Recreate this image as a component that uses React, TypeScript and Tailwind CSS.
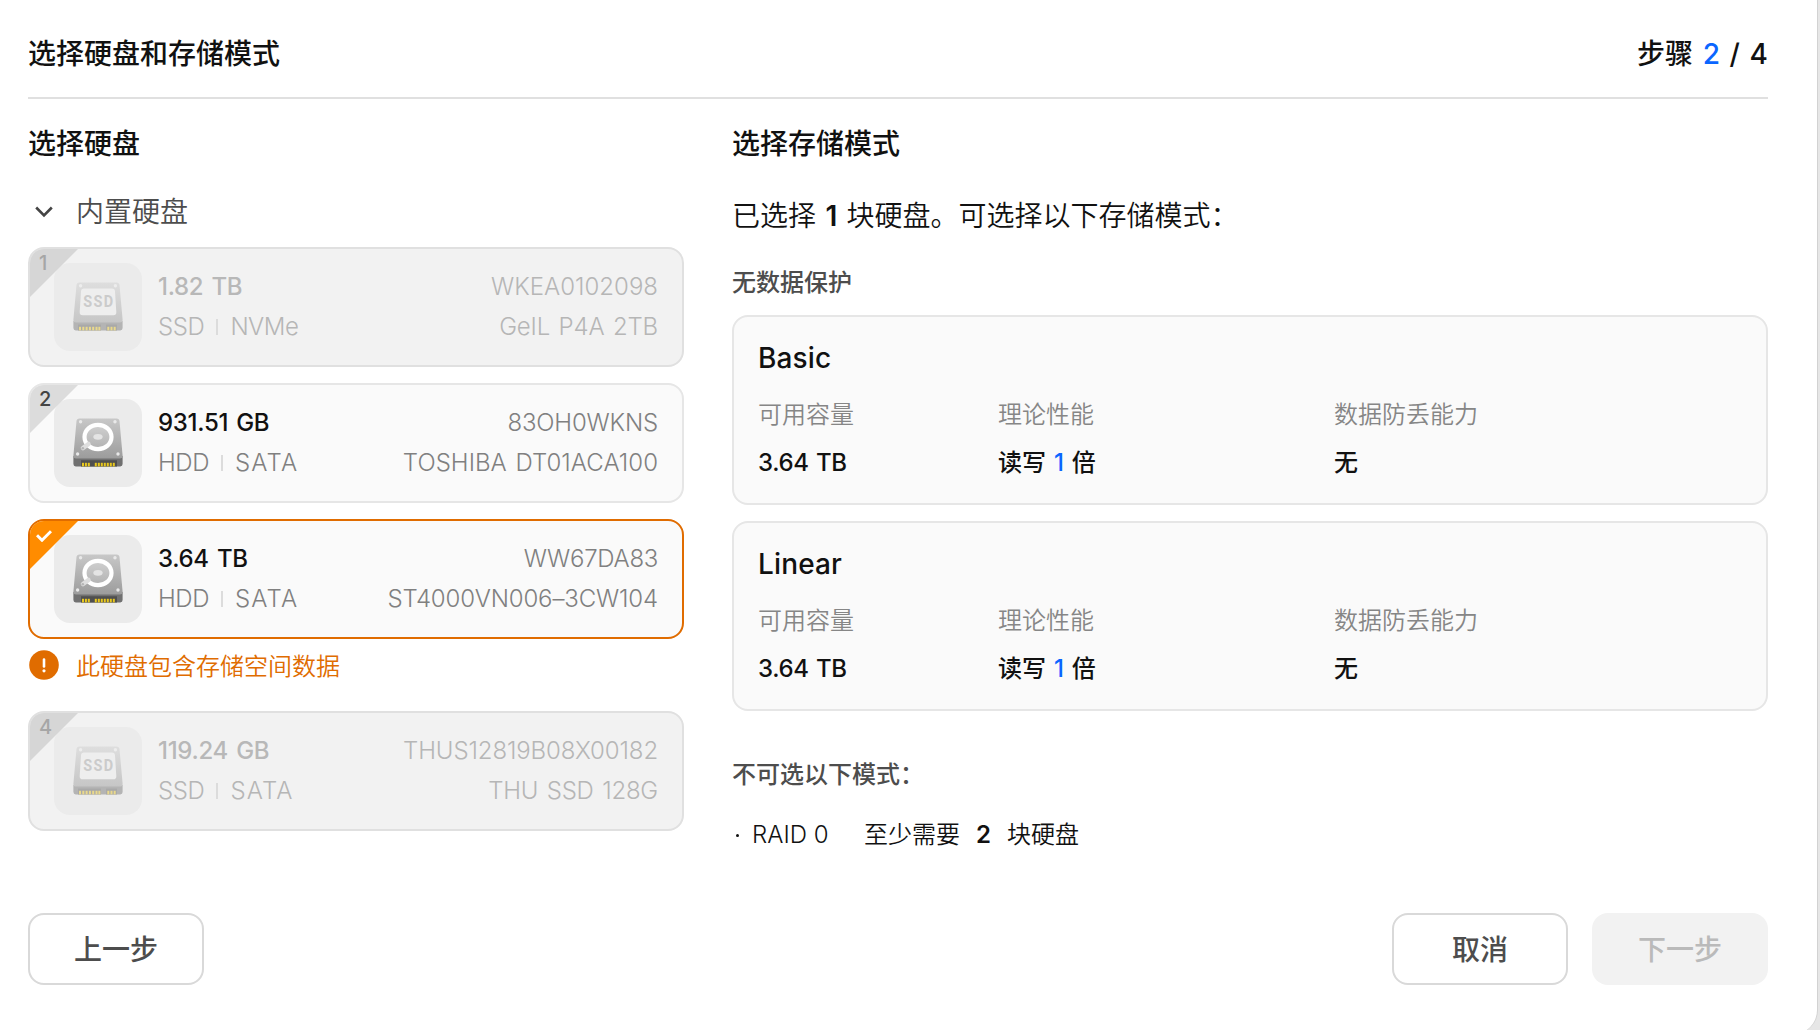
import React, { useId } from "react";

type Disk = {
  slot: number;
  kind: "SSD" | "HDD";
  size: string;
  bus: string;
  serial: string;
  serialTracking: string;
  model: string;
  modelTracking: string;
  state: "disabled" | "normal" | "selected";
};

const disks: Disk[] = [
  { slot: 1, kind: "SSD", size: "1.82 TB", bus: "NVMe", serial: "WKEA0102098", serialTracking: "tracking-[0px]", model: "GeIL P4A 2TB", modelTracking: "tracking-[-0.18px]", state: "disabled" },
  { slot: 2, kind: "HDD", size: "931.51 GB", bus: "SATA", serial: "83OH0WKNS", serialTracking: "tracking-[-0.18px]", model: "TOSHIBA DT01ACA100", modelTracking: "tracking-[0.03px]", state: "normal" },
  { slot: 3, kind: "HDD", size: "3.64 TB", bus: "SATA", serial: "WW67DA83", serialTracking: "tracking-[-0.3px]", model: "ST4000VN006–3CW104", modelTracking: "tracking-[-0.14px]", state: "selected" },
  { slot: 4, kind: "SSD", size: "119.24 GB", bus: "SATA", serial: "THUS12819B08X00182", serialTracking: "tracking-[-0.11px]", model: "THU SSD 128G", modelTracking: "tracking-[-0.22px]", state: "disabled" },
];

function Pins({ xs, fill }: { xs: number[]; fill: string }) {
  return (
    <>
      {xs.map((x) => (
        <rect key={x} x={x} y="44.8" width="2" height="3.6" fill={fill} />
      ))}
    </>
  );
}

function SsdIcon() {
  const id = useId();
  return (
    <svg viewBox="0 0 50 49" className="h-[49px] w-[50px]">
      <defs>
        <linearGradient id={id} x1="0" y1="0" x2="0" y2="1">
          <stop offset="0" stopColor="#dedede" />
          <stop offset="1" stopColor="#c6c6c6" />
        </linearGradient>
      </defs>
      <path d="M.4 39h49.2v7a2.4 2.4 0 0 1-2.400 2.400H2.800A2.400 2.400 0 0 1 .4 46Z" fill="#b4b4b4" />
      <path d="M6.500.4h37a3 3 0 0 1 3 2.700L49.600 37.500a2.800 2.800 0 0 1-2.800 3H3.200a2.800 2.800 0 0 1-2.800-3L3.500 3.100a3 3 0 0 1 3-2.700Z" fill={`url(#${id})`} />
      <path d="M5 42.500h23v6H5zM33 42.500h11v6H33z" fill="#a9a9a9" />
      <Pins xs={[6, 9.3, 12.600, 15.900, 19.200, 22.500, 25.400]} fill="#ead98c" />
      <Pins xs={[34.300, 37.500, 40.700]} fill="#ead98c" />
      <path d="M11 6.400h28a3 3 0 0 1 3 2.800L43.300 30a3 3 0 0 1-3 3.200H9.700a3 3 0 0 1-3-3.200L8 9.200a3 3 0 0 1 3-2.800Z" fill="#eeeeee" />
      <circle cx="7.600" cy="3.700" r="1.700" fill="#ededed" />
      <circle cx="42.400" cy="3.700" r="1.700" fill="#ededed" />
      <text x="10.300" y="25.400" textLength="31" lengthAdjust="spacingAndGlyphs" letterSpacing="1.500" fontSize="17" fontWeight="700" fontFamily="Roboto, sans-serif" fill="#cbcbcb">
        SSD
      </text>
    </svg>
  );
}

function HddIcon() {
  const id = useId();
  return (
    <svg viewBox="0 0 50 49" className="h-[49px] w-[50px]">
      <defs>
        <linearGradient id={id} x1="0" y1="0" x2="0" y2="1">
          <stop offset="0" stopColor="#c8c8c8" />
          <stop offset="1" stopColor="#9c9c9c" />
        </linearGradient>
        <linearGradient id={`${id}d`} x1="0" y1="0" x2="0" y2="1">
          <stop offset="0" stopColor="#d0d0d0" />
          <stop offset="1" stopColor="#b2b2b2" />
        </linearGradient>
      </defs>
      <path d="M.4 38h49.200v8a2.400 2.400 0 0 1-2.400 2.400H2.800A2.400 2.400 0 0 1 .4 46Z" fill="#707070" />
      <path d="M6.500.4h37a3 3 0 0 1 3 2.700L49.600 37.500a2.800 2.800 0 0 1-2.800 3H3.200a2.800 2.800 0 0 1-2.800-3L3.500 3.100a3 3 0 0 1 3-2.700Z" fill={`url(#${id})`} />
      <path d="M8 42.300h36v6.100H8z" fill="#4f4f4f" />
      <Pins xs={[9, 11.900, 14.800]} fill="#e8c81e" />
      <Pins xs={[21.800, 24.800, 27.800, 30.800, 33.800, 36.800, 39.800]} fill="#e8c81e" />
      <circle cx="7.600" cy="3.700" r="1.700" fill="#e9e9e9" />
      <circle cx="42" cy="3.700" r="1.700" fill="#e9e9e9" />
      <circle cx="4.600" cy="36" r="1.700" fill="#e9e9e9" />
      <circle cx="45" cy="36" r="1.700" fill="#e9e9e9" />
      <ellipse cx="25" cy="19" rx="13.500" ry="12.200" fill={`url(#${id}d)`} stroke="#fff" strokeWidth="4.200" />
      <ellipse cx="25" cy="18.800" rx="4.700" ry="2.900" fill="#e4e4e4" />
      <path d="M15.500 26 10 30" stroke="#dedede" strokeWidth="4.600" strokeLinecap="round" />
      <circle cx="9.800" cy="30.200" r="1.300" fill="#b5b5b5" />
    </svg>
  );
}

function DiskCard({ disk }: { disk: Disk }) {
  const off = disk.state === "disabled";
  const on = disk.state === "selected";
  const frame = on ? "border-[#e06c00] bg-[#fafafa]" : off ? "border-[#e0e0e0] bg-[#f2f2f2]" : "border-[#e6e6e6] bg-[#fafafa]";
  const soft = off ? "text-[#b6b6b6]" : "text-[#808080]";
  return (
    <div className={`relative flex h-[120px] w-[656px] overflow-hidden rounded-[16px] border-2 pl-6 pr-6 pt-3.5 ${frame}`}>
      <div className="mr-4 flex h-[88px] w-[88px] shrink-0 justify-center rounded-[16px] bg-[#ebebeb] pt-[19px]">
        {disk.kind === "SSD" ? <SsdIcon /> : <HddIcon />}
      </div>
      <div className="mt-1 flex-1 text-[24px] leading-[40px] [word-spacing:2px]">
        <div className="flex justify-between">
          <span className={`font-medium tracking-[-0.3px] ${off ? "text-[#b8b8b8]" : "text-[#111]"}`}>{disk.size}</span>
          <span className={`[font-weight:350] ${soft} ${disk.serialTracking}`}>{disk.serial}</span>
        </div>
        <div className="flex justify-between">
          <span className={`flex items-center [font-weight:350] ${soft}`}>
            <span className="tracking-[-0.4px]">{disk.kind}</span>
            <i className="mx-3 h-4 w-0.5 bg-[#dcdcdc]" />
            <span className={disk.bus === "SATA" ? "tracking-[1.1px]" : "tracking-[-0.5px]"}>{disk.bus}</span>
          </span>
          <span className={`[font-weight:350] ${soft} ${disk.modelTracking}`}>{disk.model}</span>
        </div>
      </div>
      <div className={`absolute left-0 top-0 h-12 w-12 [clip-path:polygon(0_0,100%_0,0_100%)] ${on ? "bg-[#ff8c00]" : off ? "bg-[#d6d6d6]" : "bg-[#dcdcdc]"}`}>
        {on ? (
          <svg viewBox="0 0 16 12" className="ml-1.5 mt-[9px] h-3 w-4" fill="none" stroke="#fff" strokeWidth="3">
            <path d="M1 5.200 6 10.200 15 1.200" />
          </svg>
        ) : (
          <span className={`block pl-[9px] text-[20px] font-medium leading-[29px] ${off ? "text-[#a6a6a6]" : "text-[#444]"}`}>{disk.slot}</span>
        )}
      </div>
    </div>
  );
}

function ModeCard({ name }: { name: string }) {
  return (
    <div className="h-[190px] rounded-[16px] border-2 border-[#e6e6e6] bg-[#fafafa] px-6 pt-[21px]">
      <div className="text-[28px] font-medium leading-[40px] tracking-[0.15px]">{name}</div>
      <div className="mt-[15px] grid grid-cols-[240px_336px_1fr] text-[24px] leading-[44px] text-[#868686] [font-weight:350]">
        <span>可用容量</span>
        <span>理论性能</span>
        <span>数据防丢能力</span>
      </div>
      <div className="grid grid-cols-[240px_336px_1fr] pt-1 text-[24px] font-medium leading-[44px]">
        <span className="tracking-[-0.3px] [word-spacing:1px]">3.64 TB</span>
        <span className="[word-spacing:1.5px]">
          读写 <span className="text-[#0a66ff]">1</span> 倍
        </span>
        <span>无</span>
      </div>
    </div>
  );
}

export default function App() {
  return (
    <div className="h-[1030px] w-[1820px] overflow-hidden bg-[#e6e6e6] font-['Inter','Noto_Sans_CJK_SC',sans-serif] text-[#111]">
      <div className="h-[1034px] w-[1818px] rounded-br-[24px] border-r border-[#d2d2d2] bg-white pl-7 pr-[49px]">
        <header className="flex h-[99px] items-center justify-between border-b-2 border-[#e0e0e0] pt-[11px] text-[28px] font-medium leading-[40px]">
          <h1>选择硬盘和存储模式</h1>
          <span className="[word-spacing:2.2px]">
            步骤 <span className="text-[#0a66ff]">2</span> / 4
          </span>
        </header>
        <div className="flex h-[814px] gap-12">
          <section className="w-[656px]">
            <h2 className="pt-[25px] text-[28px] font-medium leading-[40px]">选择硬盘</h2>
            <div className="mt-7 flex h-10 items-center pl-[7px] text-[28px] leading-[40px] text-[#4d4d4d] [font-weight:350]">
              <svg viewBox="0 0 18 12" className="mr-[23px] h-3 w-[18px]" fill="none" stroke="#444" strokeWidth="2.600">
                <path d="m1.200 1.500 7.800 7.800 7.800-7.800" />
              </svg>
              内置硬盘
            </div>
            <div className="mt-[15px] flex flex-col gap-4">
              <DiskCard disk={disks[0]} />
              <DiskCard disk={disks[1]} />
              <DiskCard disk={disks[2]} />
            </div>
            <div className="flex h-[72px] items-start pl-[1px] pt-[11px] text-[24px] leading-[34px] text-[#e06c00] [font-weight:350]">
              <svg viewBox="0 0 30 30" className="mr-[17px] h-[30px] w-[30px]">
                <circle cx="15" cy="15" r="14.800" fill="#e06c00" />
                <path d="M15 9.500v7" stroke="#fff" strokeWidth="2.600" strokeLinecap="round" />
                <circle cx="15" cy="20.800" r="1.600" fill="#fff" />
              </svg>
              此硬盘包含存储空间数据
            </div>
            <DiskCard disk={disks[3]} />
          </section>
          <section className="flex-1">
            <h2 className="pt-[25px] text-[28px] font-medium leading-[40px]">选择存储模式</h2>
            <p className="mt-8 text-[28px] leading-[40px] [font-weight:350] [word-spacing:1.5px]">
              已选择 <b className="font-semibold">1</b> 块硬盘。可选择以下存储模式：
            </p>
            <h3 className="mb-4 mt-[31px] text-[24px] font-medium leading-[32px] text-[#4d4d4d]">无数据保护</h3>
            <div className="flex flex-col gap-4">
              <ModeCard name="Basic" />
              <ModeCard name="Linear" />
            </div>
            <h3 className="mt-12 text-[24px] font-medium leading-[32px] text-[#4d4d4d]">不可选以下模式：</h3>
            <div className="mt-7 flex text-[24px] leading-[32px] [font-weight:350]">
              <i className="ml-1 mr-[13px] mt-[15px] h-[3px] w-[3px] rounded-full bg-[#111]" />
              <span className="w-[112px]">RAID 0</span>
              <span>至少需要</span>
              <b className="w-[47px] text-center font-semibold">2</b>
              <span>块硬盘</span>
            </div>
          </section>
        </div>
        <footer className="flex gap-6 text-[28px] font-medium text-[#4d4d4d]">
          <button className="mr-auto h-[72px] w-[176px] rounded-[16px] border-2 border-[#d9d9d9] pt-0.5">上一步</button>
          <button className="h-[72px] w-[176px] rounded-[16px] border-2 border-[#d9d9d9] pt-0.5">取消</button>
          <button className="h-[72px] w-[176px] rounded-[16px] bg-[#f2f2f2] pt-0.5 text-[#bababa]">下一步</button>
        </footer>
      </div>
    </div>
  );
}
